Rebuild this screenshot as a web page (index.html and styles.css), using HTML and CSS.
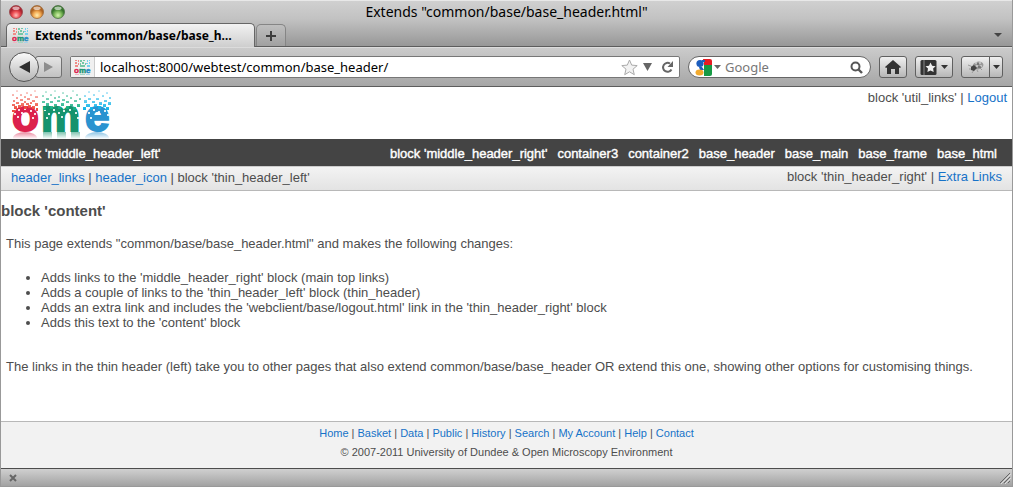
FILE: index.html
```html
<!DOCTYPE html>
<html lang="en">
<head>
<meta charset="utf-8">
<title>Extends "common/base/base_header.html"</title>
<link rel="stylesheet" href="styles.css">
</head>
<body>
<svg class="defs" aria-hidden="true">
  <defs>
    <linearGradient id="fade" x2="0" y2="1"><stop offset="0" stop-color="#fff" stop-opacity=".2"/><stop offset=".8" stop-color="#fff"/></linearGradient>
    <linearGradient id="fadeDown" x2="0" y2="1"><stop offset="0" stop-color="#fff" stop-opacity=".55"/><stop offset="1" stop-color="#fff" stop-opacity="0"/></linearGradient>
    <mask id="top"><rect width="100" height="24" fill="url(#fade)"/></mask>
    <mask id="reflect"><rect y="42" width="100" height="7" fill="url(#fadeDown)"/></mask>
    <symbol id="favicon" viewBox="0 0 17 17">
      <path d="M1 1h2v1h-2zM4 1h1v2h-1zM1 3h2v2h-2zM4 4h1v2h-1zM1 6h3v2h-3z" fill="#f08c86"/>
      <path d="M6 1h2v2h-2zM9 1h2v1h-2zM6 4h1v2h-1zM8 3h2v2h-2zM11 4h1v2h-1zM6 6h5v2h-5z" fill="#75c7a5"/>
      <path d="M13 1h1v2h-1zM15 1h1v1h-1zM12 4h2v1h-2zM15 3h1v2h-1zM13 6h3v2h-3z" fill="#75d0ee"/>
      <text class="mark-small" y="14"><tspan fill="#dc214d" stroke="#dc214d">o</tspan><tspan fill="#15936d" stroke="#15936d">m</tspan><tspan fill="#268bc3" stroke="#268bc3">e</tspan></text>
      <path d="M1 15h4v1h-4z" fill="#f2b4c1"/><path d="M6 15h5v1h-5z" fill="#a6d5c5"/><path d="M12 15h4v1h-4z" fill="#a9d2e9"/>
    </symbol>
    <radialGradient id="red" cy=".75"><stop offset="0" stop-color="#ffc0bc"/><stop offset=".55" stop-color="#ee5156"/><stop offset="1" stop-color="#ad2430"/></radialGradient>
    <radialGradient id="amber" cy=".75"><stop offset="0" stop-color="#ffeeb0"/><stop offset=".55" stop-color="#f3ab54"/><stop offset="1" stop-color="#af6423"/></radialGradient>
    <radialGradient id="green" cy=".75"><stop offset="0" stop-color="#d5f4ae"/><stop offset=".55" stop-color="#7fbb5c"/><stop offset="1" stop-color="#38762d"/></radialGradient>
  </defs>
</svg>
<div class="window">
  <header class="titlebar">
    <div class="title-row">
      <svg class="lights" viewBox="0 0 60 16" aria-hidden="true">
        <circle cx="9" cy="8" r="6.5" fill="url(#red)" stroke="#8e3a3e" stroke-width=".7"/><ellipse cx="9" cy="4.3" rx="3.6" ry="1.8" fill="#fff" opacity=".6"/>
        <circle cx="30" cy="8" r="6.5" fill="url(#amber)" stroke="#95602c" stroke-width=".7"/><ellipse cx="30" cy="4.3" rx="3.6" ry="1.8" fill="#fff" opacity=".6"/>
        <circle cx="51" cy="8" r="6.5" fill="url(#green)" stroke="#41663a" stroke-width=".7"/><ellipse cx="51" cy="4.3" rx="3.6" ry="1.8" fill="#fff" opacity=".6"/>
      </svg>
      <span class="title">Extends "common/base/base_header.html"</span>
    </div>
    <div class="tabs">
      <button class="tab"><svg class="favicon" aria-hidden="true"><use href="#favicon"/></svg>Extends "common/base/base_h…</button>
      <button class="new-tab" aria-label="New tab"><svg width="12" height="12"><path d="M6 1v10M1 6h10" stroke="#3c3c3c" stroke-width="2"/></svg></button>
      <button class="all-tabs" aria-label="List all tabs"><svg width="8" height="5"><path d="M0 0h8L4 4z" fill="#444"/></svg></button>
    </div>
  </header>
  <div class="toolbar">
    <div class="history">
      <button class="back" aria-label="Back"><svg width="13" height="14"><path d="M1 7L12 1v12z" fill="#2f2f2f"/></svg></button>
      <button class="forward" aria-label="Forward"><svg width="9" height="10"><path d="M9 5L0 0v10z" fill="#8d8d8d"/></svg></button>
    </div>
    <div class="address">
      <span class="site"><svg class="favicon" aria-hidden="true"><use href="#favicon"/></svg></span>
      <input class="url" type="text" aria-label="Address" value="localhost:8000/webtest/common/base_header/">
      <button aria-label="Bookmark"><svg width="17" height="17"><path d="M8.500 1l2.200 5.100 5.500.5-4.200 3.600 1.300 5.500-4.800-2.900-4.800 2.900L5 10.200.8 6.600l5.500-.5z" fill="#f2f2f2" stroke="#aaa"/></svg></button>
      <button aria-label="History"><svg width="9" height="8"><path d="M0 0h9L4.500 8z" fill="#666"/></svg></button>
      <button class="reload" aria-label="Reload"><svg width="14" height="14"><path d="M10.500 9.500A4.500 4.500 0 1 1 9 3.500" fill="none" stroke="#666" stroke-width="2"/><path d="M12 1v6H6.500z" fill="#666"/></svg></button>
    </div>
    <div class="search">
      <svg width="17" height="17" aria-hidden="true"><path d="M8 0h7a2 2 0 0 1 2 2v4H9z" fill="#e51b22"/><path d="M9 6h8v9a2 2 0 0 1-2 2H9z" fill="#169a45"/><path d="M0 2h9v15H0z" fill="#fff"/><circle cx="5" cy="4.500" r="3.600" fill="#1c5dbd"/><path d="M7 1h3v2H7zM4 8h3l2 3H5z" fill="#1c5dbd"/><ellipse cx="4.500" cy="13.500" rx="4" ry="3" fill="#f2aa2e"/></svg>
      <svg width="7" height="4" aria-hidden="true"><path d="M0 0h7L3.500 4z" fill="#666"/></svg>
      <input type="text" aria-label="Search" placeholder="Google">
      <button aria-label="Search"><svg width="13" height="13"><circle cx="5.500" cy="5.500" r="4" fill="none" stroke="#555" stroke-width="2"/><path d="M8.500 8.500l3.500 3.500" stroke="#555" stroke-width="2.400"/></svg></button>
    </div>
    <div class="tools">
      <button class="tool home" aria-label="Home"><svg width="16" height="14"><path d="M8 0l8 7-1 1-1-.5V14h-4V9H6v5H2V7.500L1 8 0 7z" fill="#333"/></svg></button>
      <button class="tool marks" aria-label="Bookmarks"><svg width="17" height="15"><rect x=".5" width="16" height="15" rx="1.500" fill="#333"/><path d="M4 0v15" stroke="#888"/><path d="M10.500 2.500l1.600 3.200 3.500.5-2.500 2.400.6 3.500-3.200-1.700-3.100 1.700.6-3.500-2.500-2.400 3.500-.5z" fill="#eee"/></svg><svg width="7" height="4"><path d="M0 0h7L3.500 4z" fill="#333"/></svg></button>
      <div class="split">
        <button class="tool bug" aria-label="Inspect"><svg width="18" height="15"><path d="M1 5l5 2M2 9h3M5 13l2-3M11 12l-1-2M15 10l-2-2" stroke="#999" fill="none"/><ellipse cx="11" cy="5.500" rx="5.500" ry="3.800" transform="rotate(-12 11 5.500)" fill="#999"/><path d="M4 7l3-2 3 3-3 3-3-1z" fill="#444"/><path d="M8 3h2M12 3h2M9 6h2M13 6h2" stroke="#e8e8e8"/><path d="M10 4h2M11 7h3" stroke="#555"/></svg></button>
        <button class="tool bug-menu" aria-label="Inspect options"><svg width="7" height="4"><path d="M0 0h7L3.500 4z" fill="#333"/></svg></button>
      </div>
    </div>
  </div>
  <div class="page">
    <div class="brand">
      <svg class="logo" viewBox="0 0 100 50" role="img" aria-label="ome logo">
        <text class="mark" y="41"><tspan x="0" fill="#dc214d" stroke="#dc214d">o</tspan><tspan x="29" fill="#15936d" stroke="#15936d">m</tspan><tspan x="73" fill="#2a93d0" stroke="#2a93d0">e</tspan></text>
        <path class="speckle" d="M2 23h2v2h-2zM6 19h2v2h-2zM12 18h2v2h-2zM9 22h2v2h-2zM18 20h2v2h-2zM22 23h2v2h-2zM5 26h2v2h-2zM20 27h2v2h-2zM32 19h2v2h-2zM36 23h2v2h-2zM41 19h2v2h-2zM46 22h2v2h-2zM51 20h2v2h-2zM57 19h2v2h-2zM63 22h2v2h-2zM34 27h2v2h-2zM49 26h2v2h-2zM65 27h2v2h-2zM76 22h2v2h-2zM81 19h2v2h-2zM86 21h2v2h-2zM92 20h2v2h-2zM95 24h2v2h-2zM78 27h2v2h-2z"/>
        <g mask="url(#top)">
          <path fill="#ee4c3d" d="M4 0h2v2h-2zM14 2h2v2h-2zM22 0h2v2h-2zM0 4h2v2h-2zM8 4h2v2h-2zM18 4h2v2h-2zM4 7h2v2h-2zM12 6h2v2h-2zM15 8h3v2h-3zM23 6h3v2h-3zM1 10h2v2h-2zM8 9h3v2h-3zM12 11h2v2h-2zM20 10h3v2h-3zM0 14h3v2h-3zM4 12h3v2h-3zM9 13h3v3h-3zM14 13h3v2h-3zM18 12h2v2h-2zM23 13h3v3h-3zM2 16h3v3h-3zM6 15h3v3h-3zM12 16h3v3h-3zM16 15h3v3h-3zM20 16h3v3h-3zM0 20h3v2h-3zM24 18h2v3h-2z"/>
        </g>
        <g mask="url(#top)" fill="#16b083">
          <path d="M33 1h2v2h-2zM42 0h2v2h-2zM50 2h2v2h-2zM60 0h2v2h-2zM30 5h2v2h-2zM38 4h2v2h-2zM46 6h2v2h-2zM54 5h2v2h-2zM64 4h2v2h-2zM34 8h3v2h-3zM42 7h2v2h-2zM50 9h3v2h-3zM58 7h2v2h-2zM67 8h2v2h-2zM30 11h3v2h-3zM38 11h3v2h-3zM45 10h3v2h-3zM54 11h3v2h-3zM62 10h3v2h-3zM34 13h3v3h-3zM42 14h3v2h-3zM49 13h3v3h-3zM58 14h3v2h-3zM65 14h3v3h-3zM31 17h3v3h-3zM38 16h3v3h-3zM46 17h3v2h-3zM54 16h3v3h-3zM61 17h3v3h-3z"/>
        </g>
        <g mask="url(#top)" fill="#12b4e8">
          <path d="M76 1h2v2h-2zM86 0h2v2h-2zM94 2h2v2h-2zM72 5h2v2h-2zM81 4h2v2h-2zM90 5h2v2h-2zM97 7h2v2h-2zM76 8h3v2h-3zM84 8h3v2h-3zM92 10h3v2h-3zM72 10h3v3h-3zM80 11h3v2h-3zM87 12h3v3h-3zM96 12h3v3h-3zM74 14h4v3h-4zM82 14h3v3h-3zM91 14h3v3h-3zM71 17h3v3h-3zM78 17h3v3h-3zM86 16h3v3h-3zM94 17h3v3h-3z"/>
        </g>
        <g mask="url(#reflect)"><ellipse cx="13" cy="48" rx="12" ry="6" fill="#dc214d"/><path d="M31 42h9v7h-9zM45 42h9v7h-9zM59 42h9v7h-9z" fill="#15936d"/><ellipse cx="85" cy="48" rx="12" ry="6" fill="#2a93d0"/></g>
      </svg>
      <p>block 'util_links' | <a href="#">Logout</a></p>
    </div>
    <nav class="middle">
      <span>block 'middle_header_left'</span>
      <div class="middle-links"><span>block 'middle_header_right'</span><a href="#">container3</a><a href="#">container2</a><a href="#">base_header</a><a href="#">base_main</a><a href="#">base_frame</a><a href="#">base_html</a></div>
    </nav>
    <div class="thin">
      <p><a href="#">header_links</a> | <a href="#">header_icon</a> | block 'thin_header_left'</p>
      <p class="thin-right">block 'thin_header_right' | <a href="#">Extra Links</a></p>
    </div>
    <main>
      <h1>block 'content'</h1>
      <p>This page extends "common/base/base_header.html" and makes the following changes:</p>
      <ul>
        <li>Adds links to the 'middle_header_right' block (main top links)</li>
        <li>Adds a couple of links to the 'thin_header_left' block (thin_header)</li>
        <li>Adds an extra link and includes the 'webclient/base/logout.html' link in the 'thin_header_right' block</li>
        <li>Adds this text to the 'content' block</li>
      </ul>
      <p>The links in the thin header (left) take you to other pages that also extend common/base/base_header OR extend this one, showing other options for customising things.</p>
    </main>
    <footer>
      <p><a href="#">Home</a> | <a href="#">Basket</a> | <a href="#">Data</a> | <a href="#">Public</a> | <a href="#">History</a> | <a href="#">Search</a> | <a href="#">My Account</a> | <a href="#">Help</a> | <a href="#">Contact</a></p>
      <p>© 2007-2011 University of Dundee &amp; Open Microscopy Environment</p>
    </footer>
  </div>
  <div class="status">
    <button aria-label="Close add-on bar"><svg width="8" height="8"><path d="M1 1l6 6M7 1L1 7" stroke="#666" stroke-width="2"/></svg></button>
    <svg width="12" height="12" aria-hidden="true"><path d="M1 11L11 1M5 11l6-6M9 11l2-2" stroke="#666" stroke-width="1"/><path d="M2 12L12 2M6 12l6-6" stroke="#ddd"/></svg>
  </div>
</div>
</body>
</html>
```
FILE: styles.css
```css
* { box-sizing: border-box; }
body {
  margin: 0;
  font: 13px/15px "Liberation Sans", Arial, sans-serif;
  color: #4d4d4d;
}
p, h1, ul { margin: 0; }
a { color: #1672c8; text-decoration: none; }
button {
  display: flex;
  align-items: center;
  justify-content: center;
  padding: 0;
  border: 0;
  background: none;
  color: #000;
}
input {
  min-width: 0;
  flex: 1;
  padding: 0;
  border: 0;
  outline: 0;
  background: none;
}
.defs { position: absolute; width: 0; height: 0; }
.mark { font: bold 44px "Liberation Sans", Arial, sans-serif; stroke-width: 2px; }
.mark-small { font: bold 8px "Liberation Sans", Arial, sans-serif; stroke-width: .4px; }

.window {
  display: flex;
  flex-direction: column;
  min-height: 100vh;
  border: solid #999;
  border-width: 0 1px 1px;
}

/* Title bar and tabs */
.titlebar {
  border-top: 1px solid #e8e8e8;
  border-bottom: 1px solid #5c5c5c;
  background: linear-gradient(#d0d0d0, #c2c2c2 40%, #979797);
  font-family: "Noto Sans", sans-serif;
  color: #000;
}
.title-row {
  display: grid;
  grid-template-columns: 1fr auto 1fr;
  align-items: center;
  height: 22px;
  padding: 0 6px;
}
.lights { width: 60px; height: 16px; }
.title { font-size: 14px; line-height: 20px; }
.tabs { display: flex; align-items: flex-end; height: 23px; padding: 0 10px 0 5px; }
.tab {
  gap: 6px;
  justify-content: flex-start;
  width: 249px;
  height: 24px;
  margin-bottom: -1px;
  padding-left: 5px;
  border: 1px solid #666;
  border-bottom: 0;
  border-radius: 5px 5px 0 0;
  background: linear-gradient(#f2f2f2, #cecece);
  font: bold 12px/18px "Noto Sans", sans-serif;
  white-space: nowrap;
}
.favicon { width: 17px; height: 17px; }
.new-tab {
  width: 30px;
  height: 22px;
  margin-left: 1px;
  border: 1px solid #858585;
  border-bottom: 0;
  border-radius: 5px 5px 0 0;
  background: linear-gradient(#bfbfbf, #a0a0a0);
}
.all-tabs { height: 21px; margin-left: auto; }

/* Navigation toolbar */
.toolbar {
  display: flex;
  align-items: center;
  height: 40px;
  padding: 0 9px 0 8px;
  border-top: 1px solid #dcdcdc;
  border-bottom: 1px solid #5c5c5c;
  background: linear-gradient(#cbcbcb, #a6a6a6);
}
.history { display: flex; align-items: center; }
.back {
  z-index: 1;
  width: 30px;
  height: 30px;
  border: 1px solid #555;
  border-radius: 50%;
  background: linear-gradient(#fafafa, #b6b6b6);
}
.forward {
  width: 27px;
  height: 22px;
  margin-left: -4px;
  border: 1px solid #707070;
  border-radius: 3px;
  background: linear-gradient(#e5e5e5, #c2c2c2);
}
.address {
  display: flex;
  flex: 1;
  align-items: center;
  gap: 5px;
  height: 22px;
  margin-left: 8px;
  padding-right: 4px;
  border: 1px solid #777;
  border-radius: 2px;
  background: #fff;
}
.site {
  display: flex;
  align-items: center;
  height: 20px;
  padding: 0 3px;
  border-right: 1px solid #ccc;
  background: #f0f0f0;
}
.url { font: 13px/20px "Noto Sans", sans-serif; color: #000; }
.reload { margin-left: 4px; }
.search {
  display: flex;
  align-items: center;
  gap: 2px;
  width: 183px;
  height: 22px;
  margin-left: 8px;
  padding: 0 7px 0 6px;
  border: 1px solid #666;
  border-radius: 11px;
  background: #fff;
}
.search input { padding-left: 2px; font: 13px/20px "Noto Sans", sans-serif; }
.search input::placeholder { color: #777; opacity: 1; }
.tools { display: flex; gap: 8px; margin-left: 8px; }
.tool {
  gap: 4px;
  height: 22px;
  border: 1px solid #606060;
  border-radius: 3px;
  background: linear-gradient(#f0f0f0, #b7b7b7);
}
.home { width: 28px; }
.marks { width: 38px; }
.split { display: flex; }
.bug { width: 29px; border-radius: 3px 0 0 3px; }
.bug-menu { width: 14px; margin-left: -1px; border-radius: 0 3px 3px 0; }

/* Page */
.page { display: flex; flex: 1; flex-direction: column; background: #fff; }
.brand { display: flex; justify-content: space-between; height: 52px; padding: 3px 5px 0 11px; }
.logo { width: 100px; height: 50px; }
.speckle { fill: #fff; opacity: .85; }
.middle {
  display: flex;
  align-items: center;
  justify-content: space-between;
  height: 27px;
  padding: 2px 15px 0 10px;
  background: #444;
  color: #fff;
  -webkit-text-stroke: .4px #fff;
}
.middle a { color: #fff; }
.middle-links { display: flex; gap: 10px; }
.thin {
  display: flex;
  justify-content: space-between;
  height: 25px;
  padding: 3px 10px 0;
  border-top: 1px solid #ccc;
  border-bottom: 1px solid #b8b8b8;
  background: linear-gradient(#f3f3f3, #e3e3e3);
}
.thin-right { margin-top: -1px; }
main { flex: 1; padding-top: 11px; }
h1 { font-size: 15px; line-height: 18px; }
main p { padding: 16px 5px 0; }
main ul { padding: 19px 0 13px 40px; }
footer {
  display: flex;
  flex-direction: column;
  gap: 4px;
  height: 47px;
  padding-top: 4px;
  border-top: 1px solid #b8b8b8;
  background: #f2f2f2;
  font-size: 11px;
  text-align: center;
}
.status {
  display: flex;
  align-items: center;
  justify-content: space-between;
  height: 18px;
  padding: 0 1px 0 8px;
  border-top: 1px solid #4d4d4d;
  background: linear-gradient(#d0d0d0, #a2a2a2);
}
```
